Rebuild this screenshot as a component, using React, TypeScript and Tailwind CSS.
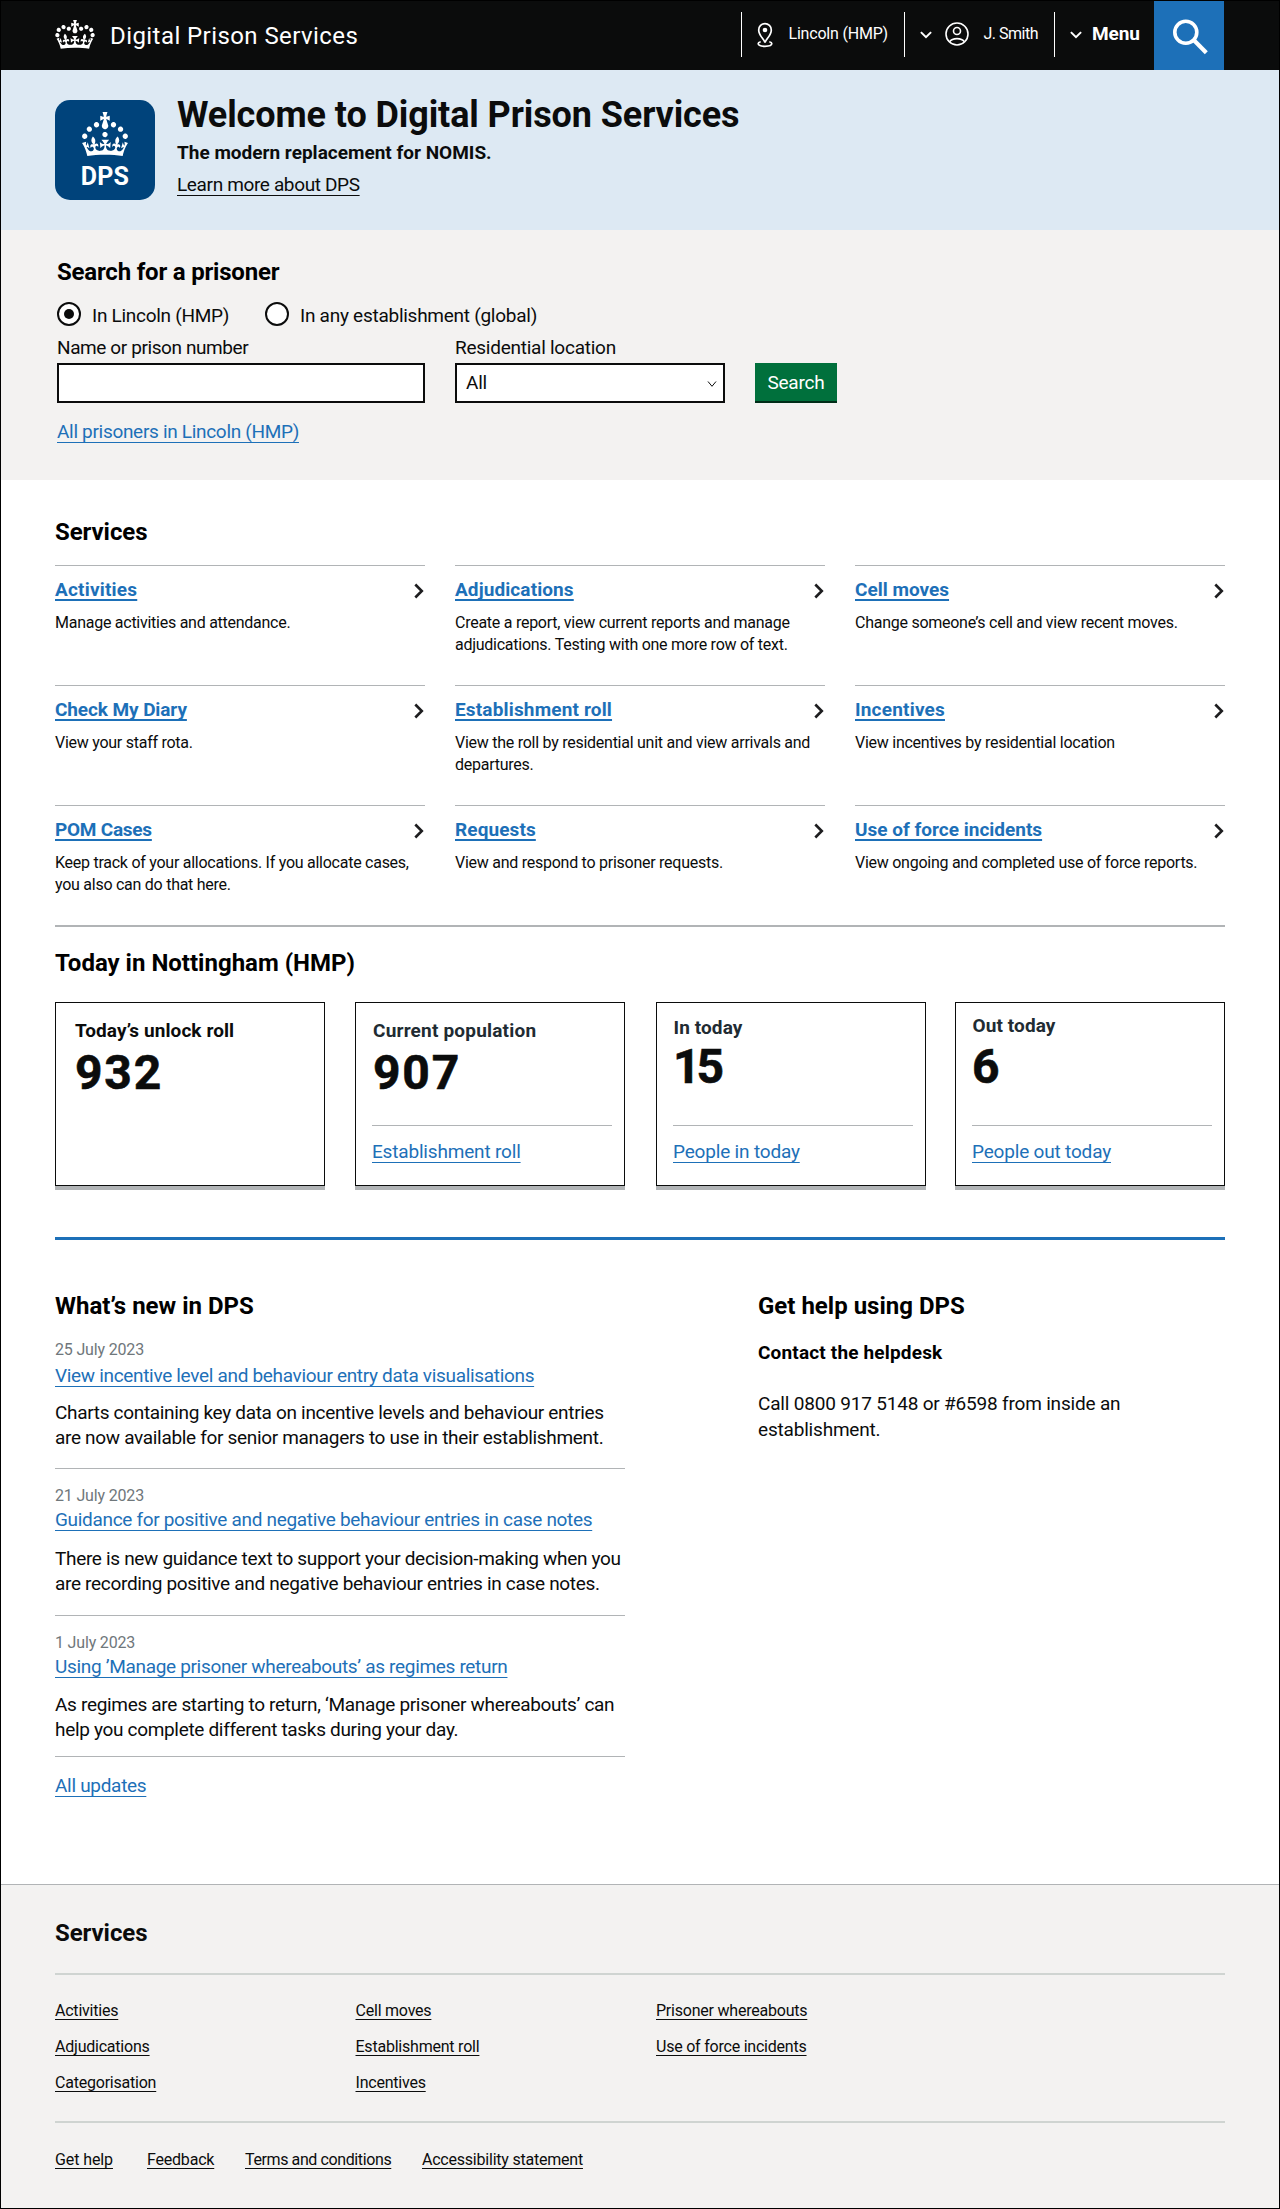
import React from "react";

const LINK = "underline decoration-1 underline-offset-[4px] [text-decoration-skip-ink:none]";
const FOOTER_LINK = "underline decoration-1 underline-offset-[3px] [text-decoration-skip-ink:none]";

const OLD_CROWN =
  "M25 30.2c3.5 1.5 7.7-.2 9.1-3.7 1.5-3.6-.2-7.8-3.9-9.2-3.6-1.4-7.6.3-9.1 3.9-1.4 3.5.3 7.5 3.9 9zM9 39.5c3.6 1.5 7.8-.2 9.2-3.7 1.5-3.6-.2-7.8-3.9-9.1-3.6-1.5-7.6.2-9.1 3.8-1.4 3.5.3 7.5 3.8 9zM4.4 57.2c3.5 1.5 7.7-.2 9.1-3.8 1.5-3.6-.2-7.7-3.9-9.1-3.5-1.5-7.6.3-9.1 3.8-1.4 3.5.3 7.6 3.9 9.1zm38.3-21.4c3.5 1.5 7.7-.2 9.1-3.8 1.5-3.6-.2-7.7-3.9-9.1-3.6-1.5-7.6.3-9.1 3.8-1.3 3.6.4 7.7 3.9 9.1zm64.4-5.6c-3.6 1.5-7.8-.2-9.1-3.7-1.5-3.6.2-7.8 3.8-9.2 3.6-1.4 7.7.3 9.2 3.9 1.3 3.5-.4 7.5-3.9 9zm15.9 9.3c-3.6 1.5-7.7-.2-9.1-3.7-1.5-3.6.2-7.8 3.7-9.1 3.6-1.5 7.7.2 9.2 3.8 1.5 3.5-.3 7.5-3.8 9zm4.7 17.7c-3.6 1.5-7.8-.2-9.2-3.8-1.5-3.6.2-7.7 3.9-9.1 3.6-1.5 7.7.3 9.2 3.8 1.3 3.5-.4 7.6-3.9 9.1zM89.3 35.8c-3.6 1.5-7.8-.2-9.2-3.8-1.4-3.6.2-7.7 3.9-9.1 3.6-1.5 7.7.3 9.2 3.8 1.4 3.6-.3 7.7-3.9 9.1zM69.7 17.7l8.9 4.7V9.3l-8.9 2.8c-.2-.3-.5-.6-.9-.9L72.4 0H59.6l3.5 11.2c-.3.3-.6.5-.9.9l-8.8-2.8v13.1l8.8-4.7c.3.3.6.7.9.9l-5 15.4v.1c-.2.8-.4 1.6-.4 2.4 0 4.1 3.1 7.5 7 8.1h.2c.3 0 .7.1 1 .1.4 0 .7 0 1-.1h.2c4-.6 7.1-4.1 7.1-8.1 0-.8-.1-1.7-.4-2.4V34l-5.1-15.4c.4-.2.7-.6 1-.9zM66 92.8c16.9 0 32.8 1.1 47.1 3.2 4-16.9 8.9-26.7 14-33.5l-9.6-3.4c1 4.9 1.1 7.2 0 10.2-1.5-1.4-3-4.3-4.2-8.7L108.6 76c2.8-2 5-3.2 7.5-3.3-4.4 9.4-10 11.9-13.6 11.2-4.3-.8-6.3-4.6-5.6-7.9 1-4.7 5.7-5.9 8-.5 4.3-8.7-3-11.4-7.6-8.8 7.1-7.2 7.9-13.5 2.1-21.1-8 6.1-8.1 12.3-4.5 20.8-4.7-5.4-12.1-2.5-9.5 6.2 3.4-5.2 7.9-2 7.2 3.1-.6 4.3-6.4 7.8-13.5 7.2-10.3-.9-10.9-8-11.2-13.8 2.5-.5 7.1 1.8 11 7.3L80.2 60c-4.1 4.4-8 5.3-12.3 5.4 1.4-4.4 8-11.6 8-11.6H55.5s6.4 7.2 7.9 11.6c-4.2-.1-8-1-12.3-5.4l1.4 16.4c3.9-5.5 8.5-7.7 10.9-7.3-.3 5.8-.9 12.8-11.1 13.8-7.2.6-12.9-2.9-13.5-7.2-.7-5 3.8-8.3 7.1-3.1 2.7-8.7-4.6-11.6-9.4-6.2 3.7-8.5 3.6-14.7-4.6-20.8-5.8 7.6-5 13.9 2.2 21.1-4.7-2.6-11.9.1-7.7 8.8 2.3-5.5 7.1-4.2 8.1.5.7 3.3-1.3 7.1-5.7 7.9-3.5.7-9-1.8-13.5-11.2 2.5.1 4.7 1.3 7.5 3.3l-4.7-15.4c-1.2 4.4-2.7 7.2-4.3 8.7-1.1-3-.9-5.3 0-10.2l-9.5 3.4c5 6.9 9.9 16.7 14 33.5 14.8-2.1 30.8-3.2 47.7-3.2z";

const ARCHED_CROWN =
  "M22.6 10.4c-1 .4-2-.1-2.4-1-.4-.9.1-2 1-2.4.9-.4 2 .1 2.4 1s-.1 2-1 2.4m-5.9 6.7c-.9.4-2-.1-2.4-1-.4-.9.1-2 1-2.4.9-.4 2 .1 2.4 1s-.1 2-1 2.4m10.8-3.7c-1 .4-2-.1-2.4-1-.4-.9.1-2 1-2.4.9-.4 2 .1 2.4 1s0 2-1 2.4m3.3 4.8c-1 .4-2-.1-2.4-1-.4-.9.1-2 1-2.4.9-.4 2 .1 2.4 1s-.1 2-1 2.4M17 4.7l2.3 1.2V2.5l-2.3.7-.2-.2.9-3h-3.4l.9 3-.2.2c-.1.1-2.3-.7-2.3-.7v3.4L15 4.7c.1.1.1.2.2.2l-1.3 4c-.1.2-.1.4-.1.6 0 1.1.8 2 1.9 2.2h.7c1-.2 1.9-1.1 1.9-2.1 0-.2 0-.4-.1-.6l-1.3-4c-.1-.2 0-.2.1-.3m-7.6 5.7c.9.4 2-.1 2.4-1 .4-.9-.1-2-1-2.4-.9-.4-2 .1-2.4 1s0 2 1 2.4m-5 3c.9.4 2-.1 2.4-1 .4-.9-.1-2-1-2.4-.9-.4-2 .1-2.4 1s.1 2 1 2.4m-3.2 4.8c.9.4 2-.1 2.4-1 .4-.9-.1-2-1-2.4-.9-.4-2 .1-2.4 1s0 2 1 2.4m14.8 11c4.4 0 8.6.3 12.3.8 1.1-4.5 2.4-7 3.7-8.8l-2.5-.9c.2 1.3.3 1.9 0 2.7-.4-.4-.8-1.1-1.1-2.3l-1.2 4c.7-.5 1.3-.8 2-.9-1.1 2.5-2.6 3.1-3.5 3-1.1-.2-1.7-1.2-1.5-2.1.3-1.2 1.5-1.5 2.1-.1 1.1-2.3-.8-3-2-2.3 1.9-1.9 2.1-3.5.6-5.6-2.1 1.6-2.1 3.2-1.2 5.5-1.2-1.4-3.2-.6-2.5 1.6.9-1.4 2.1-.5 1.9.8-.2 1.1-1.7 2.1-3.5 1.9-2.7-.2-2.9-2.1-2.9-3.6.7-.1 1.9.5 2.9 1.9l.4-4.3c-1.1 1.1-2.1 1.4-3.2 1.4.4-1.2 2.1-3 2.1-3h-5.4s1.7 1.9 2.1 3c-1.1 0-2.1-.2-3.2-1.4l.4 4.3c1-1.4 2.2-2 2.9-1.9-.1 1.5-.2 3.4-2.9 3.6-1.9.2-3.4-.8-3.5-1.9-.2-1.3 1-2.2 1.9-.8.7-2.3-1.2-3-2.5-1.6.9-2.2.9-3.9-1.2-5.5-1.5 2-1.3 3.7.6 5.6-1.2-.7-3.1 0-2 2.3.6-1.4 1.8-1.1 2.1.1.2.9-.3 1.9-1.5 2.1-.9.2-2.4-.5-3.5-3 .6 0 1.2.3 2 .9l-1.2-4c-.3 1.1-.7 1.9-1.1 2.3-.3-.8-.2-1.4 0-2.7l-2.9.9C1.3 23 2.6 25.5 3.7 30c3.7-.5 7.9-.8 12.3-.8";

function DownChevron() {
  return (
    <svg className="h-[8px] w-[12px] shrink-0" viewBox="0 0 12 8" fill="none" stroke="white" strokeWidth="2">
      <path d="M0.9 1.1 6 6.2l5.1-5.1" />
    </svg>
  );
}

function RightChevron() {
  return (
    <svg className="mt-[6px] mr-[1.5px] h-[16px] w-[10px] shrink-0" viewBox="0 0 10 16" fill="none" stroke="#1d1d1f" strokeWidth="2.6">
      <path d="M1.3 1.5 7.8 8l-6.5 6.5" />
    </svg>
  );
}

function Header() {
  return (
    <header className="flex h-[69px] bg-[#0b0c0c] pr-[55px] pl-[54px] text-white">
      <svg className="mt-[19px] h-[29px] w-[40px]" viewBox="0 0 132 97" fill="white">
        <path d={OLD_CROWN} />
      </svg>
      <span className="mt-[20px] ml-[15px] text-[24px] leading-[30px] tracking-[0.43px]">Digital Prison Services</span>
      <div className="mt-[11px] ml-auto flex h-[45px]">
        <div className="flex w-[163px] border-l border-white pl-[15px]">
          <svg className="mt-[10px] h-[26px] w-[16px]" viewBox="0 0 16 26" fill="none" stroke="white" strokeWidth="1.7">
            <path d="M8 20.6C7.2 17 1.7 13.8 1.7 7.9a6.3 6.3 0 0 1 12.6 0C14.3 13.8 8.8 17 8 20.6z" />
            <circle cx="8" cy="8" r="2.3" fill="white" stroke="none" />
            <path d="M3.7 19.7c-1.6.4-2.5 1-2.5 1.9 0 1.7 3 2.7 6.8 2.7s6.8-1 6.8-2.7c0-.9-.9-1.5-2.5-1.9" />
          </svg>
          <span className="mt-[12px] ml-[15.5px] text-[16px] leading-[20px] tracking-[-0.2px]">Lincoln (HMP)</span>
        </div>
        <div className="flex w-[150px] border-l border-white pl-[15px]">
          <div className="mt-[19px]">
            <DownChevron />
          </div>
          <svg className="mt-[10px] ml-[13px] h-[24px] w-[24px]" viewBox="0 0 24 24" fill="none" stroke="white" strokeWidth="1.6">
            <circle cx="12" cy="12" r="11" />
            <circle cx="12" cy="9" r="3.5" />
            <path d="M4.600 19.800c1.500-2.300 4.300-3.200 7.400-3.200s5.900.9 7.400 3.200" />
          </svg>
          <span className="mt-[12px] ml-[14.5px] text-[16px] leading-[20px] tracking-[-0.5px]">J. Smith</span>
        </div>
        <div className="flex w-[100px] border-l border-white pl-[15px]">
          <div className="mt-[19px]">
            <DownChevron />
          </div>
          <span className="mt-[9px] ml-[10px] text-[19px] leading-[25px] font-bold tracking-[-0.1px]">Menu</span>
        </div>
      </div>
      <div className="h-[69px] w-[70px] bg-[#1d70b8]">
        <svg className="mt-[18px] ml-[19px] h-[36px] w-[36px]" viewBox="0 0 36 36" fill="none" stroke="white" strokeWidth="3.6">
          <circle cx="12.8" cy="13.2" r="11" />
          <path d="M20.7 21.1 33.3 33.7" strokeWidth="4.2" />
        </svg>
      </div>
    </header>
  );
}

function Hero() {
  return (
    <section className="flex h-[160px] bg-[#dde9f3] pl-[54px] text-[#0b0c0c]">
      <div className="mt-[30px] flex h-[100px] w-[100px] flex-col items-center rounded-[15px] bg-[#00437b] text-white">
        <svg className="mt-[12px] h-[44px] w-[46px]" viewBox="0 0 32 30" fill="white" preserveAspectRatio="none">
          <path d={ARCHED_CROWN} />
        </svg>
        <span className="mt-[6px] text-[25px] leading-[30px] font-bold tracking-[0.2px]">DPS</span>
      </div>
      <div className="ml-[22px] pt-[25px]">
        <h1 className="text-[36px] leading-[40px] font-bold tracking-[-0.1px]">Welcome to Digital Prison Services</h1>
        <p className="mt-[5px] text-[19px] leading-[25px] font-bold">The modern replacement for NOMIS.</p>
        <p className="mt-[7px] text-[19px] leading-[25px] tracking-[-0.36px]">
          <a className={LINK}>Learn more about DPS</a>
        </p>
      </div>
    </section>
  );
}

function Search() {
  return (
    <section className="h-[250px] bg-[#f3f2f1] pt-[27px] pl-[56px] text-[19px] leading-[25px] text-[#0b0c0c]">
      <h2 className="text-[24px] leading-[30px] font-bold tracking-[-0.2px] text-black">Search for a prisoner</h2>
      <div className="mt-[15px] flex h-[24px]">
        <span className="flex size-[24px] items-center justify-center rounded-full border-2 border-[#0b0c0c] bg-white">
          <span className="size-[10px] rounded-full bg-[#0b0c0c]" />
        </span>
        <span className="mt-px ml-[11px] w-[173px] tracking-[-0.28px]">In Lincoln (HMP)</span>
        <span className="size-[24px] rounded-full border-2 border-[#0b0c0c] bg-white" />
        <span className="mt-px ml-[11px] tracking-[-0.26px]">In any establishment (global)</span>
      </div>
      <div className="mt-[9px] flex">
        <div className="w-[398px]">
          <div className="tracking-[-0.4px]">Name or prison number</div>
          <div className="mt-[3px] h-[40px] w-[368px] border-2 border-[#0b0c0c] bg-white" />
        </div>
        <div className="w-[300px]">
          <div className="tracking-[-0.25px]">Residential location</div>
          <div className="mt-[3px] flex h-[40px] w-[270px] justify-between border-2 border-[#0b0c0c] bg-white pt-[5px] pr-[6px] pl-[9px]">
            <span className="tracking-[-0.2px]">All</span>
            <svg className="mt-[10px] h-[8px] w-[10px]" viewBox="0 0 10 8" fill="none" stroke="#0b0c0c" strokeWidth="1">
              <path d="M1 1.5 5 6.3 9 1.5" />
            </svg>
          </div>
        </div>
        <div className="mt-[28px] h-[40px] w-[82px] border-b-2 border-[#002d18] bg-[#00703c] pt-[7px] text-center tracking-[-0.2px] text-white">
          Search
        </div>
      </div>
      <a className={`${LINK} mt-[16px] inline-block tracking-[-0.31px] text-[#1d70b8]`}>All prisoners in Lincoln (HMP)</a>
    </section>
  );
}

const services = [
  ["Activities", "Manage activities and attendance.", "tracking-[0.2px]"],
  ["Adjudications", "Create a report, view current reports and manage adjudications. Testing with one more row of text.", "tracking-[0.1px]"],
  ["Cell moves", "Change someone’s cell and view recent moves.", ""],
  ["Check My Diary", "View your staff rota.", "tracking-[-0.1px]"],
  ["Establishment roll", "View the roll by residential unit and view arrivals and departures.", "tracking-[0.16px]"],
  ["Incentives", "View incentives by residential location", "tracking-[0.2px]"],
  ["POM Cases", "Keep track of your allocations. If you allocate cases, you also can do that here.", "tracking-[-0.25px]"],
  ["Requests", "View and respond to prisoner requests.", "tracking-[0.1px]"],
  ["Use of force incidents", "View ongoing and completed use of force reports.", ""],
];

function Services() {
  return (
    <section className="pt-[37px]">
      <h2 className="text-[24px] leading-[30px] font-bold tracking-[-0.07px]">Services</h2>
      <div className="mt-[18px] grid grid-cols-3 gap-x-[30px]">
        {services.map(([name, text, tracking]) => (
          <div key={name} className="h-[120px] border-t border-[#b1b4b6] pt-[11px]">
            <div className="flex justify-between">
              <a
                className={`text-[19px] leading-[25px] font-bold text-[#1d70b8] underline decoration-2 underline-offset-[3px] [text-decoration-skip-ink:none] ${tracking}`}
              >
                {name}
              </a>
              <RightChevron />
            </div>
            <p className="w-[366px] pt-[10px] text-[16px] leading-[22px] tracking-[-0.26px] text-[#0b0c0c]">{text}</p>
          </div>
        ))}
      </div>
    </section>
  );
}

type StatProps = { label: string; value: string; link?: string; box: string; labelClass: string; valueClass: string };

const stats: StatProps[] = [
  { label: "Today’s unlock roll", value: "932", box: "pt-[15px] pl-[19px]", labelClass: "tracking-[0.08px] text-[#0b0c0c]", valueClass: "mt-[5px] tracking-[1.8px]" },
  { label: "Current population", value: "907", link: "Establishment roll", box: "pt-[15px] pl-[16px]", labelClass: "ml-px tracking-[0.2px] text-[#212b32]", valueClass: "mt-[5px] ml-px tracking-[1.8px]" },
  { label: "In today", value: "15", link: "People in today", box: "ml-px -mr-px pt-[12px] pl-[16px]", labelClass: "ml-[0.5px] tracking-[0.1px] text-[#212b32]", valueClass: "mt-[2px] tracking-[-4px]" },
  { label: "Out today", value: "6", link: "People out today", box: "pt-[10px] pl-[16px]", labelClass: "ml-[0.5px] tracking-[0.1px] text-[#212b32]", valueClass: "mt-[4px]" },
];

function Today() {
  return (
    <section className="border-t-2 border-[#b1b4b6] pt-[21px]">
      <h2 className="text-[24px] leading-[30px] font-bold">Today in Nottingham (HMP)</h2>
      <div className="mt-[24px] grid grid-cols-4 gap-[30px]">
        {stats.map((s) => (
          <div key={s.label} className={`flex h-[184px] flex-col border border-[#0b0c0c] pb-[21px] shadow-[0_4px_0_#b1b4b6] ${s.box}`}>
            <div className={`text-[19px] leading-[25px] font-bold ${s.labelClass}`}>{s.label}</div>
            <div className={`text-[48px] leading-[50px] font-bold text-[#0b0c0c] [-webkit-text-stroke:0.6px_#0b0c0c] ${s.valueClass}`}>{s.value}</div>
            {s.link && (
              <div className="mt-auto w-[240px] border-t border-[#b1b4b6] pt-[13px] text-[19px] leading-[25px] tracking-[-0.18px]">
                <a className={`${LINK} text-[#1d70b8]`}>{s.link}</a>
              </div>
            )}
          </div>
        ))}
      </div>
    </section>
  );
}

const news = [
  {
    date: "25 July 2023",
    title: "View incentive level and behaviour entry data visualisations",
    text: "Charts containing key data on incentive levels and behaviour entries are now available for senior managers to use in their establishment.",
    spacing: ["pt-[19px]", "mt-[3px]", "mt-[12px]", "pb-[18px]"],
  },
  {
    date: "21 July 2023",
    title: "Guidance for positive and negative behaviour entries in case notes",
    text: "There is new guidance text to support your decision-making when you are recording positive and negative behaviour entries in case notes.",
    spacing: ["pt-[17px]", "mt-[1px]", "mt-[14px]", "pb-[19px]"],
  },
  {
    date: "1 July 2023",
    title: "Using ’Manage prisoner whereabouts’ as regimes return",
    text: "As regimes are starting to return, ‘Manage prisoner whereabouts’ can help you complete different tasks during your day.",
    spacing: ["pt-[17px]", "mt-[1px]", "mt-[13px]", "pb-[14px]"],
  },
];

function News() {
  return (
    <section className="mt-[51px] flex h-[647px] border-t-[3px] border-[#1d70b8] pt-[51px] text-[19px] leading-[25px]">
      <div className="w-[703px]">
        <h2 className="text-[24px] leading-[30px] font-bold">What’s new in DPS</h2>
        {news.map((n) => (
          <article key={n.date} className={`w-[570px] border-b border-[#b1b4b6] ${n.spacing[0]} ${n.spacing[3]}`}>
            <div className="text-[16px] leading-[20px] tracking-[-0.17px] text-[#6f777b]">{n.date}</div>
            <div className={`tracking-[-0.32px] text-[#1d70b8] ${n.spacing[1]}`}>
              <a className={LINK}>{n.title}</a>
            </div>
            <p className={`tracking-[-0.32px] text-[#0b0c0c] ${n.spacing[2]}`}>{n.text}</p>
          </article>
        ))}
        <a className={`${LINK} mt-[16px] inline-block tracking-[-0.3px] text-[#1d70b8]`}>All updates</a>
      </div>
      <div className="w-[380px]">
        <h2 className="text-[24px] leading-[30px] font-bold">Get help using DPS</h2>
        <h3 className="mt-[19px] font-bold tracking-[0.17px]">Contact the helpdesk</h3>
        <p className="mt-[26px] leading-[26px] tracking-[-0.19px] text-[#0b0c0c]">Call 0800 917 5148 or #6598 from inside an establishment.</p>
      </div>
    </section>
  );
}

const footerColumns = [
  ["Activities", "Adjudications", "Categorisation"],
  ["Cell moves", "Establishment roll", "Incentives"],
  ["Prisoner whereabouts", "Use of force incidents"],
];

function Footer() {
  return (
    <footer className="grow border-t border-[#b1b4b6] bg-[#f3f2f1] px-[54px] pt-[33px] text-[16px] leading-[20px] text-[#0b0c0c]">
      <h2 className="text-[24px] leading-[30px] font-bold tracking-[-0.07px]">Services</h2>
      <div className="mt-[25px] flex h-[150px] border-y-2 border-[#cfd4d1] pt-[26px]">
        {footerColumns.map((col) => (
          <ul key={col[0]} className="flex w-[300.5px] flex-col gap-[16px] tracking-[-0.22px]">
            {col.map((t) => (
              <li key={t}>
                <a className={FOOTER_LINK}>{t}</a>
              </li>
            ))}
          </ul>
        ))}
      </div>
      <div className="mt-[27px] flex">
        <a className={`${FOOTER_LINK} w-[92px] tracking-[-0.1px]`}>Get help</a>
        <a className={`${FOOTER_LINK} w-[98px] tracking-[-0.2px]`}>Feedback</a>
        <a className={`${FOOTER_LINK} w-[177px] tracking-[-0.39px]`}>Terms and conditions</a>
        <a className={`${FOOTER_LINK} tracking-[-0.22px]`}>Accessibility statement</a>
      </div>
    </footer>
  );
}

export default function App() {
  return (
    <div className="flex h-[2209px] w-[1280px] flex-col border border-black bg-white font-['Roboto',sans-serif] text-black">
      <Header />
      <Hero />
      <Search />
      <main className="px-[54px]">
        <Services />
        <Today />
        <News />
      </main>
      <Footer />
    </div>
  );
}
